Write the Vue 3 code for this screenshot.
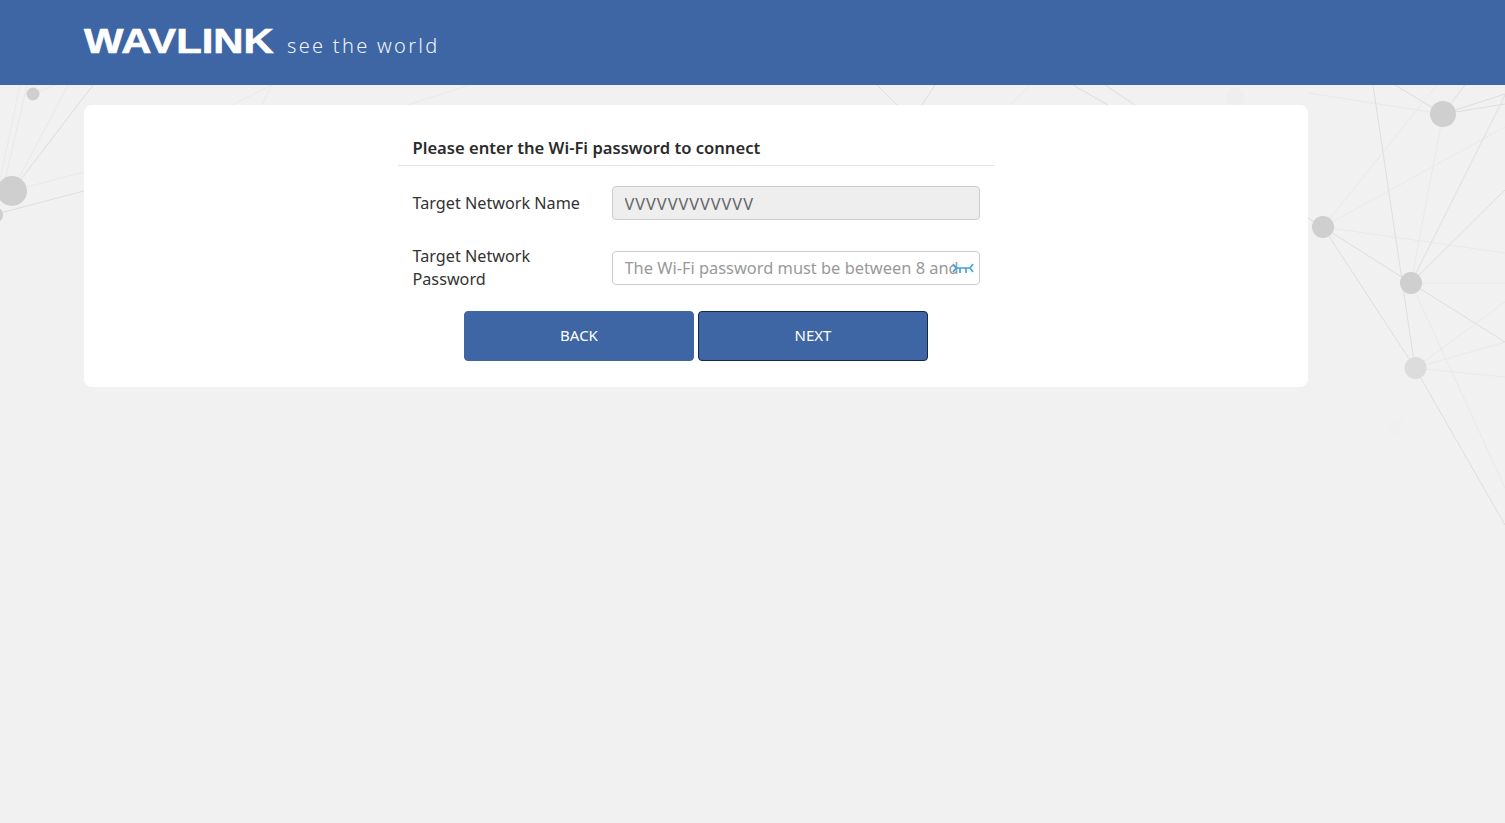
<script setup>
const strong = [
  [1373,85,1415,368],[1411,283,1505,95],[1411,283,1505,190],[1411,283,1505,342],[1411,283,1323,227],
  [1323,227,1415,368],[1415,368,1505,525],[1443,114,1505,94],[1443,114,1505,104],[1443,114,1465,85],
  [1443,114,1395,85],[12,191,93,85],[0,213,84,191],[877,85,897,105],[935,85,922,105],[1073,85,1108,105],
  [1105,85,1135,105],[1323,227,1308,218]
]
const faint = [
  [1411,283,1505,488],[1415,368,1505,342],[1415,368,1505,377],[1323,227,1505,127],[1323,227,1437,85],
  [1323,227,1505,253],[1443,114,1411,283],[1411,283,1505,283],[1415,368,1505,302],[1443,114,1308,93],
  [12,191,68,85],[5,180,27,85],[0,180,20,85],[33,94,55,85],[33,94,36,85],[12,191,84,172],
  [232,105,272,85],[262,105,272,85],[407,105,470,85],[1010,105,1030,85]
]
const nodes = [
  [1443,114,13,'#cfcfcf'],[1323,227,11,'#cfcfcf'],[1411,283,11,'#cfcfcf'],[1415.5,368,11,'#dcdcdc'],
  [33,94,6.5,'#cfcfcf'],[12,191,15,'#cfcfcf'],[-5,215,8,'#cfcfcf'],[1398,427,9,'#f0f0f0'],[1235,98,10,'#eeeeee']
]
</script>

<template>
  <div class="page">
    <svg class="backdrop" width="1505" height="823" viewBox="0 0 1505 823" aria-hidden="true">
      <line v-for="(l, i) in faint" :key="'f' + i" :x1="l[0]" :y1="l[1]" :x2="l[2]" :y2="l[3]" stroke="#e9e9e9" stroke-width="1" />
      <line v-for="(l, i) in strong" :key="'s' + i" :x1="l[0]" :y1="l[1]" :x2="l[2]" :y2="l[3]" stroke="#dedede" stroke-width="1" />
      <circle v-for="(n, i) in nodes" :key="'n' + i" :cx="n[0]" :cy="n[1]" :r="n[2]" :fill="n[3]" />
    </svg>

    <header class="header">
      <span class="logo">WAVLINK</span>
      <span class="slogan">see the world</span>
    </header>

    <main class="card">
      <form class="form" @submit.prevent>
        <h2 class="title">Please enter the Wi-Fi password to connect</h2>

        <div class="row row-name">
          <label class="label">Target Network Name</label>
          <div class="field">
            <input class="input" type="text" value="VVVVVVVVVVVV" disabled />
          </div>
        </div>

        <div class="row row-pass">
          <label class="label">Target Network Password</label>
          <div class="field">
            <input class="input input-pass" type="password" placeholder="The Wi-Fi password must be between 8 and 32 characters" />
            <svg class="eye" width="22" height="14" viewBox="0 0 22 14" aria-hidden="true">
              <path d="M4 7H18M4 7L1 3M4 7L1 11M18 7L21 3M18 7L21 11M8 7V12M14 7V12" fill="none" stroke="#41a0dc" stroke-width="1.7" />
            </svg>
          </div>
        </div>

        <div class="actions">
          <button class="btn" type="button">BACK</button>
          <button class="btn btn-focus" type="button">NEXT</button>
        </div>
      </form>
    </main>
  </div>
</template>

<style>
html, body { margin: 0; background: #f1f1f1; }
</style>

<style scoped>
.page {
  position: relative;
  min-height: 823px;
  background: #f1f1f1;
  overflow: hidden;
  font-family: "Noto Sans", "Open Sans", sans-serif;
  color: #333;
}
.backdrop { position: absolute; left: 0; top: 0; }
.header {
  position: relative;
  height: 85px;
  box-sizing: border-box;
  background: #3e66a4;
  padding: 24px 0 0 84px;
  display: flex;
  align-items: flex-start;
}
.logo {
  flex: none;
  display: block;
  width: 163px;
  margin-right: 40px;
  color: #fff;
  font-family: "Liberation Sans", sans-serif;
  font-weight: 700;
  font-size: 35px;
  line-height: 34px;
  white-space: nowrap;
  -webkit-text-stroke: 0.6px #fff;
  transform: scaleX(1.195);
  transform-origin: left center;
}
.slogan {
  margin-top: 8px;
  color: #eef2f8;
  font-family: "Noto Sans", sans-serif;
  font-weight: 300;
  font-size: 20px;
  line-height: 27px;
  letter-spacing: 2.3px;
  white-space: nowrap;
}
.card {
  position: relative;
  width: 1224px;
  height: 282px;
  margin: 20px 0 0 84px;
  box-sizing: border-box;
  background: #fff;
  border-radius: 8px;
}
.form {
  width: 597px;
  margin: 0 auto;
  padding-top: 29px;
}
.title {
  margin: 0;
  height: 31px;
  padding-left: 15px;
  border-bottom: 1px solid #e5e5e5;
  font-size: 16.6px;
  font-weight: 600;
  line-height: 28px;
  color: #2b2b2b;
}
.row {
  display: flex;
  align-items: center;
  padding: 0 15px;
}
.row-name { margin-top: 20px; }
.row-pass { margin-top: 25px; }
.label {
  width: 199px;
  box-sizing: border-box;
  padding-right: 15px;
  font-size: 16.2px;
  line-height: 23px;
}
.field {
  position: relative;
  width: 368px;
}
.input {
  display: block;
  width: 100%;
  height: 34px;
  box-sizing: border-box;
  padding: 0 12px;
  border: 1px solid #ccc;
  border-radius: 4px;
  background: #fff;
  font: inherit;
  font-size: 16.4px;
  color: #555;
  outline: none;
}
.input:disabled { background: #eee; color: #666; opacity: 1; font-kerning: none; letter-spacing: 0.95px; }
.input-pass { padding-right: 18px; padding-bottom: 2px; }
.input::placeholder { color: #999; opacity: 1; }
.eye {
  position: absolute;
  right: 6px;
  top: 10px;
}
.actions {
  display: flex;
  justify-content: center;
  gap: 4px;
  margin-top: 20px;
}
.btn {
  width: 230px;
  height: 50px;
  box-sizing: border-box;
  border: 1px solid #3e66a4;
  border-radius: 4px;
  background: #3e66a4;
  color: #fff;
  font: inherit;
  font-size: 15px;
  padding: 0 0 2px;
}
.btn-focus { border-color: #14294a; }
</style>
